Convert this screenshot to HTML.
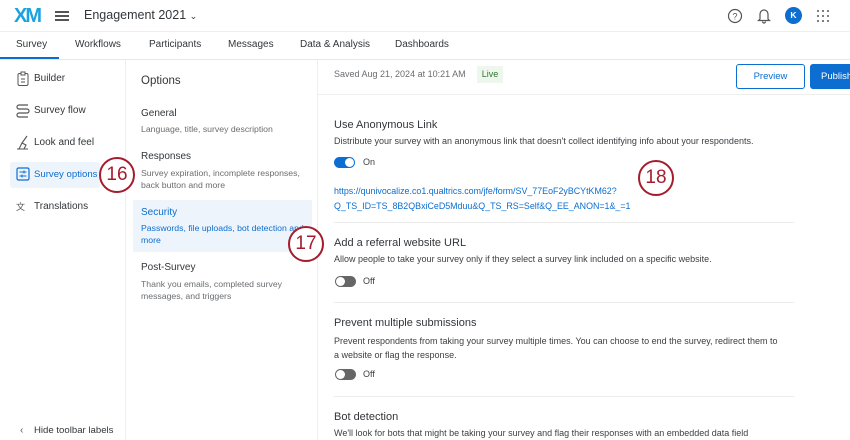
<!DOCTYPE html>
<html><head><style>
*{margin:0;padding:0;box-sizing:border-box}
body{width:850px;height:440px;overflow:hidden;background:#fff;font-family:"Liberation Sans",sans-serif;color:#32363a;position:relative}
.a{position:absolute;white-space:nowrap}
.s{font-size:8.7px;color:#6a6d70}
.d{font-size:9.5px;color:#3d4044}
.h{font-size:11px;color:#32363a}
.blue{color:#0b6ed0}
.circ{position:absolute;width:36px;height:36px;border:2.5px solid #a51d2d;border-radius:50%;background:#fff;color:#a51d2d;font-size:19px;text-align:center;line-height:31px}
.tog{position:absolute;width:21px;height:11px;border-radius:6px}
.tog i{position:absolute;top:1px;width:9px;height:9px;border-radius:50%;background:#fff}
.hr{position:absolute;height:1px;background:#ececec}
</style></head><body>
<div class="a" style="left:14px;top:5px;font-size:20px;font-weight:bold;color:#1aa3e0;letter-spacing:-2px">XM</div>
<div class="a" style="left:55px;top:11px;width:14px;height:2px;background:#555;box-shadow:0 4px 0 #555,0 8px 0 #555"></div>
<div class="a" style="left:84px;top:8px;font-size:12.5px;color:#32363a">Engagement 2021 <span style="font-size:9px">&#8964;</span></div>
<svg class="a" style="left:727px;top:8px" width="16" height="16"><circle cx="8" cy="8" r="6.5" fill="none" stroke="#555" stroke-width="1.2"/><text x="8" y="11.5" font-size="9" text-anchor="middle" fill="#555" font-family="Liberation Sans">?</text></svg>
<svg class="a" style="left:757px;top:7px" width="14" height="17"><path d="M3 12V7a4 4 0 0 1 8 0v5l1.5 1.5h-11z M5.5 14.5a1.5 1.5 0 0 0 3 0" fill="none" stroke="#555" stroke-width="1.2"/></svg>
<div class="a" style="left:785px;top:7px;width:17px;height:17px;border-radius:50%;background:#0b6ed0;color:#fff;font-size:8.5px;font-weight:bold;text-align:center;line-height:17px">K</div>
<svg class="a" style="left:816px;top:9px" width="14" height="14" fill="#555"><circle cx="2" cy="2" r="1"/><circle cx="7" cy="2" r="1"/><circle cx="12" cy="2" r="1"/><circle cx="2" cy="7" r="1"/><circle cx="7" cy="7" r="1"/><circle cx="12" cy="7" r="1"/><circle cx="2" cy="12" r="1"/><circle cx="7" cy="12" r="1"/><circle cx="12" cy="12" r="1"/></svg>
<div class="a" style="left:0;top:31px;width:850px;height:1px;background:#eee"></div>
<div class="a" style="top:39px;left:16px;font-size:10px">Survey</div>
<div class="a" style="top:39px;left:75px;font-size:10px">Workflows</div>
<div class="a" style="top:39px;left:149px;font-size:10px">Participants</div>
<div class="a" style="top:39px;left:228px;font-size:10px">Messages</div>
<div class="a" style="top:39px;left:300px;font-size:10px">Data &amp; Analysis</div>
<div class="a" style="top:39px;left:395px;font-size:10px">Dashboards</div>
<div class="a" style="left:0;top:57px;width:59px;height:2px;background:#0b6ed0"></div>
<div class="a" style="left:0;top:59px;width:850px;height:1px;background:#e8e8e8"></div>
<div class="a" style="left:125px;top:60px;width:1px;height:380px;background:#eee"></div>
<div class="a" style="left:317px;top:60px;width:1px;height:380px;background:#eee"></div>
<svg class="a" style="left:16px;top:71px" width="14" height="16"><rect x="2" y="2.5" width="10" height="12" rx="1.5" fill="none" stroke="#555"/><rect x="5" y="1" width="4" height="3" fill="#fff" stroke="#555"/><path d="M5 8h4M5 11h4" stroke="#555"/></svg>
<div class="a" style="left:34px;top:73px;font-size:10px">Builder</div>
<svg class="a" style="left:15px;top:103px" width="16" height="16"><path d="M13 2H4a2 2 0 0 0 0 4h8a2 2 0 0 1 0 4H4a2 2 0 0 0 0 4h9" fill="none" stroke="#555" stroke-width="1.2"/></svg>
<div class="a" style="left:34px;top:105px;font-size:10px">Survey flow</div>
<svg class="a" style="left:16px;top:135px" width="14" height="16"><path d="M1 14h11M3 14l3-6 4 2-2 4M6 8l5-7" fill="none" stroke="#555" stroke-width="1.1"/></svg>
<div class="a" style="left:34px;top:137px;font-size:10px">Look and feel</div>
<div class="a" style="left:10px;top:162px;width:90px;height:26px;background:#eef4fb;border-radius:3px"></div>
<svg class="a" style="left:16px;top:167px" width="14" height="14"><rect x="1" y="1" width="12" height="12" rx="1.5" fill="none" stroke="#0b6ed0" stroke-width="1.2"/><path d="M3.5 5h7M3.5 9h7" stroke="#0b6ed0"/><path d="M8 3.5v3M6 7.5v3" stroke="#0b6ed0"/></svg>
<div class="a blue" style="left:34px;top:169px;font-size:9.6px">Survey options</div>
<div class="a" style="left:16px;top:200px;font-size:9px;color:#555">&#25991;</div>
<div class="a" style="left:34px;top:201px;font-size:10px">Translations</div>
<div class="a" style="left:20px;top:425px;font-size:10px;color:#555">&lsaquo;</div>
<div class="a" style="left:34px;top:425px;font-size:9.6px">Hide toolbar labels</div>
<div class="a" style="left:141px;top:75px;font-size:11.5px">Options</div>
<div class="a" style="left:141px;top:108px;font-size:10px">General</div>
<div class="a s" style="left:141px;top:124px">Language, title, survey description</div>
<div class="a" style="left:141px;top:151px;font-size:10px">Responses</div>
<div class="a s" style="left:141px;top:168px;line-height:11.5px;white-space:normal;width:172px">Survey expiration, incomplete responses, back button and more</div>
<div class="a" style="left:133px;top:200px;width:179px;height:52px;background:#eef4fb"></div>
<div class="a blue" style="left:141px;top:207px;font-size:10px">Security</div>
<div class="a blue" style="left:141px;top:223px;font-size:8.7px;line-height:11.5px;white-space:normal;width:172px">Passwords, file uploads, bot detection and more</div>
<div class="a" style="left:141px;top:262px;font-size:10px">Post-Survey</div>
<div class="a s" style="left:141px;top:279px;line-height:11.5px;white-space:normal;width:150px">Thank you emails, completed survey messages, and triggers</div>
<div class="a" style="left:334px;top:69px;font-size:9px;color:#6a6d70">Saved Aug 21, 2024 at 10:21 AM</div>
<div class="a" style="left:477px;top:66px;width:26px;height:17px;background:#eef6ee;color:#2d7a2d;font-size:9px;text-align:center;line-height:17px">Live</div>
<div class="a" style="left:736px;top:64px;width:69px;height:25px;border:1px solid #0b6ed0;border-radius:3px;color:#0b6ed0;font-size:9.5px;text-align:center;line-height:23px">Preview</div>
<div class="a" style="left:810px;top:64px;width:50px;height:25px;background:#0b6ed0;border-radius:3px;color:#fff;font-size:9.5px;line-height:25px;padding-left:11px">Publish</div>
<div class="a" style="left:318px;top:94px;width:532px;height:1px;background:#eee"></div>
<div class="a h" style="left:334px;top:119px">Use Anonymous Link</div>
<div class="a d" style="left:334px;top:136px;font-size:9px">Distribute your survey with an anonymous link that doesn't collect identifying info about your respondents.</div>
<div class="tog" style="left:334px;top:157px;background:#0b6ed0"><i style="left:11px"></i></div>
<div class="a d" style="left:363px;top:157px;font-size:9px">On</div>
<div class="a blue" style="left:334px;top:184px;font-size:8.9px;line-height:15px">https://qunivocalize.co1.qualtrics.com/jfe/form/SV_77EoF2yBCYtKM62?<br>Q_TS_ID=TS_8B2QBxiCeD5Mduu&amp;Q_TS_RS=Self&amp;Q_EE_ANON=1&amp;_=1</div>
<div class="hr" style="left:334px;top:222px;width:460px"></div>
<div class="a h" style="left:334px;top:237px">Add a referral website URL</div>
<div class="a d" style="left:334px;top:254px;font-size:9px">Allow people to take your survey only if they select a survey link included on a specific website.</div>
<div class="tog" style="left:335px;top:276px;background:#666"><i style="left:1px"></i></div>
<div class="a d" style="left:363px;top:276px;font-size:9px">Off</div>
<div class="hr" style="left:334px;top:302px;width:460px"></div>
<div class="a h" style="left:334px;top:317px">Prevent multiple submissions</div>
<div class="a d" style="left:334px;top:334px;line-height:14px;font-size:9px">Prevent respondents from taking your survey multiple times. You can choose to end the survey, redirect them to<br>a website or flag the response.</div>
<div class="tog" style="left:335px;top:369px;background:#666"><i style="left:1px"></i></div>
<div class="a d" style="left:363px;top:369px;font-size:9px">Off</div>
<div class="hr" style="left:334px;top:396px;width:460px"></div>
<div class="a h" style="left:334px;top:411px">Bot detection</div>
<div class="a d" style="left:334px;top:428px;font-size:9px">We'll look for bots that might be taking your survey and flag their responses with an embedded data field</div>
<div class="circ" style="left:99px;top:157px">16</div>
<div class="circ" style="left:288px;top:226px">17</div>
<div class="circ" style="left:638px;top:160px">18</div>
</body></html>
